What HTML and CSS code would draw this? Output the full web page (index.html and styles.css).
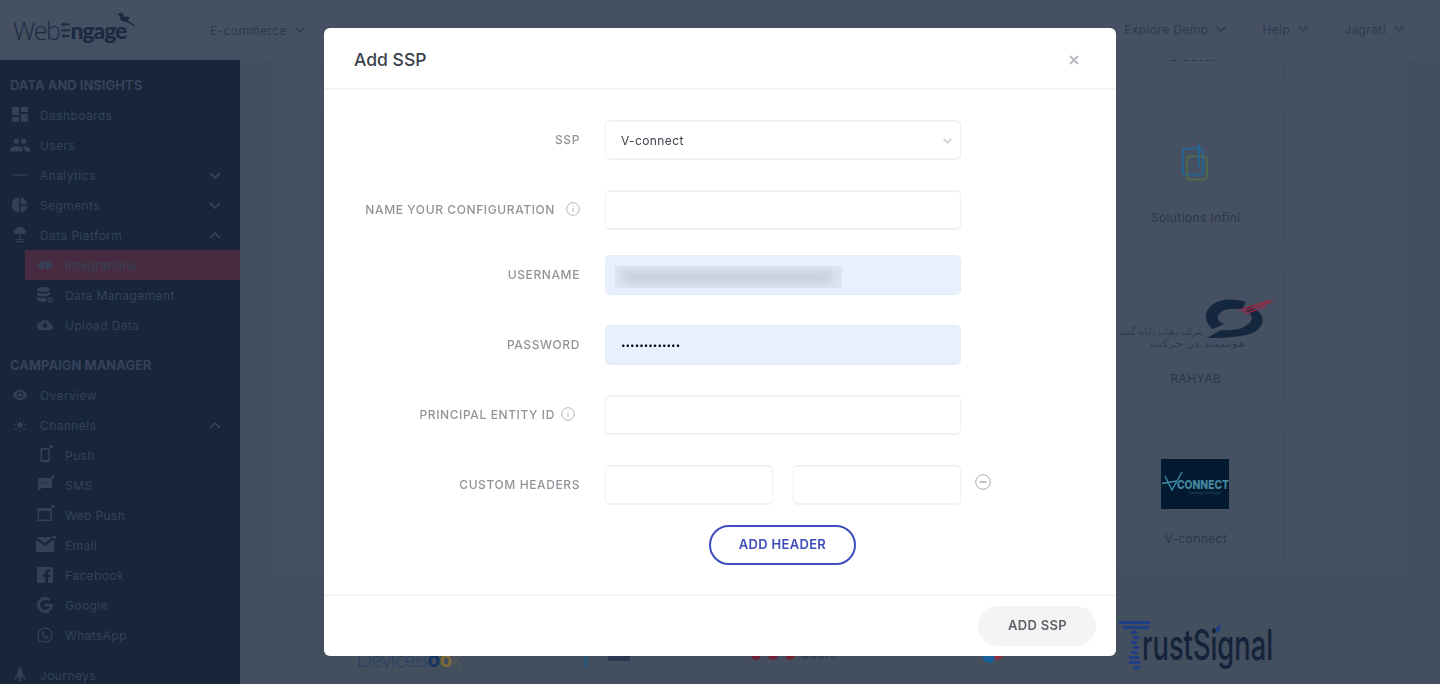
FILE: index.html
```html
<!DOCTYPE html>
<html lang="en">
<head>
<meta charset="utf-8">
<title>Add SSP</title>
<link rel="stylesheet" href="styles.css">
</head>
<body>
<header class="topbar">
  <div class="logo">
    <span class="logo-web">Web</span>
    <svg class="logo-e" viewBox="0 0 9 17"><path d="M3.500 0v1.500H9v1.800H3.500v1.500L0 2.400zM0 7.500h9v1.800H0zM3.500 11.500v1.500H9v1.800H3.500v1.700L0 14.100z"/></svg>
    <span class="logo-ngage">ngage</span>
    <svg class="logo-bird" viewBox="0 0 38 32"><path d="M1 4.500 7 5c2-3 6-3.500 8-1 2 2.500 3 5 3.500 7C20 9 25 8 26 11c.8 2.500-1 4-3 4l13 9-1.500 1.500L21 18c-5 1-10-2-11-7-.6-2.500-.8-4-2-5z"/></svg>
  </div>
  <nav class="nav-left"><span class="nav-item">E-commerce<svg class="chev" viewBox="0 0 10 6"><path d="M.7.7 5 5 9.300.7"/></svg></span></nav>
  <nav class="nav-right">
    <span class="nav-item">Explore Demo<svg class="chev" viewBox="0 0 10 6"><path d="M.7.7 5 5 9.300.7"/></svg></span>
    <span class="nav-item">Help<svg class="chev" viewBox="0 0 10 6"><path d="M.7.7 5 5 9.300.7"/></svg></span>
    <span class="nav-item">Jagrati<svg class="chev" viewBox="0 0 10 6"><path d="M.7.7 5 5 9.300.7"/></svg></span>
  </nav>
</header>

<div class="shell">
  <aside class="sidebar">
    <h2 class="side-title">Data and Insights</h2>
    <a class="side-item"><svg class="ic" viewBox="0 0 16 16"><path d="M0 0h7v8H0zM9 0h7v5H9zM0 10h7v5H0zM9 7h7v8H9z"/></svg>Dashboards</a>
    <a class="side-item"><svg class="ic ic-wide" viewBox="0 0 24 24"><path d="M16 11c1.660 0 2.990-1.340 2.990-3S17.660 5 16 5c-1.660 0-3 1.340-3 3s1.340 3 3 3zm-8 0c1.660 0 2.990-1.340 2.990-3S9.660 5 8 5C6.340 5 5 6.340 5 8s1.340 3 3 3zm0 2c-2.330 0-7 1.170-7 3.500V19h14v-2.500c0-2.330-4.670-3.500-7-3.500zm8 0c-.29 0-.62.02-.97.05 1.160.84 1.970 1.970 1.970 3.450V19h6v-2.500c0-2.330-4.670-3.500-7-3.500z"/></svg>Users</a>
    <a class="side-item"><svg class="ic line" viewBox="0 0 16 16"><path d="M1 9l3-1.500L7 9l3-2 2 1.500L15 7"/></svg>Analytics<svg class="side-chev" viewBox="0 0 12 7"><path d="M1 1l5 5 5-5"/></svg></a>
    <a class="side-item"><svg class="ic" viewBox="0 0 16 16"><path d="M7 .5v15A7.500 7.500 0 0 1 7 .5zM8.500.5a7.500 7.500 0 0 1 7 7h-7zM8.500 9h7a7.500 7.500 0 0 1-7 6.500z"/></svg>Segments<svg class="side-chev" viewBox="0 0 12 7"><path d="M1 1l5 5 5-5"/></svg></a>
    <a class="side-item"><svg class="ic" viewBox="0 0 16 16"><path d="M4.500 7a2.600 2.600 0 0 1-.3-5.200A4.500 4.500 0 0 1 12.300 2 2.600 2.600 0 0 1 11.500 7zM7.400 8h1.200v4H12v1H4v-1h3.400zM3 14h10v1.200H3z"/></svg>Data Platform<svg class="side-chev" viewBox="0 0 12 7"><path d="M1 6l5-5 5 5"/></svg></a>
    <a class="side-sub is-active"><svg class="ic" viewBox="0 0 16 10"><path d="M0 5l4-4h3v8H4zM8.500 1H12l4 4-4 4H8.500z"/></svg>Integrations</a>
    <a class="side-sub"><svg class="ic" viewBox="0 0 16 16"><path d="M0 2.500C0 1 3 0 6.500 0S13 1 13 2.500 10 5 6.500 5 0 4 0 2.500zM0 4.500C1 6 4 6.400 6.500 6.400S12 6 13 4.500V7c0 1.500-3 2.500-6.500 2.500S0 8.500 0 7zM0 9c1 1.500 4 2 6.500 2H9v3.600c-.8.200-1.600.4-2.500.4C3 15 0 14 0 12.500z"/><circle class="gear" cx="13" cy="13" r="2"/></svg>Data Management</a>
    <a class="side-sub"><svg class="ic" viewBox="0 0 24 24"><path d="M19.350 10.040C18.670 6.590 15.640 4 12 4 9.110 4 6.600 5.640 5.350 8.040 2.340 8.360 0 10.910 0 14c0 3.310 2.690 6 6 6h13c2.760 0 5-2.240 5-5 0-2.640-2.050-4.780-4.650-4.960zM14 13v4h-4v-4H7l5-5 5 5h-3z"/></svg>Upload Data</a>

    <h2 class="side-title side-title-next">Campaign Manager</h2>
    <a class="side-item"><svg class="ic" viewBox="0 0 24 24"><path d="M12 4.500C7 4.500 2.730 7.610 1 12c1.730 4.390 6 7.500 11 7.500s9.270-3.110 11-7.500c-1.730-4.390-6-7.500-11-7.500zM12 17c-2.760 0-5-2.240-5-5s2.240-5 5-5 5 2.240 5 5-2.240 5-5 5zm0-8c-1.660 0-3 1.340-3 3s1.340 3 3 3 3-1.340 3-3-1.340-3-3-3z"/></svg>Overview</a>
    <a class="side-item"><svg class="ic" viewBox="0 0 16 16"><circle cx="8" cy="8" r="2.800"/><path class="ray" d="M8 1v2.500M8 12.500V15M1.500 8H4M12 8h2.500M3.200 3.200l1.800 1.800M11 11l1.800 1.800M12.800 3.200 11 5M5 11l-1.800 1.800"/></svg>Channels<svg class="side-chev" viewBox="0 0 12 7"><path d="M1 6l5-5 5 5"/></svg></a>
    <a class="side-sub"><svg class="ic ic-up" viewBox="0 0 18 18"><path fill-rule="evenodd" d="M4.500 3h7.500a1 1 0 0 1 1 1v12a1 1 0 0 1-1 1H4.500a1 1 0 0 1-1-1V4a1 1 0 0 1 1-1zM5 4.500V15h6.500V4.500z"/><circle cx="14.500" cy="1.500" r="1.700"/></svg>Push</a>
    <a class="side-sub"><svg class="ic ic-up" viewBox="0 0 18 18"><path fill-rule="evenodd" d="M2 3h12a1 1 0 0 1 1 1v8a1 1 0 0 1-1 1H5l-4 3V4a1 1 0 0 1 1-1zM4.500 7.300v1.200H6V7.300zm2.500 0v1.200h1.500V7.300zm2.500 0v1.200H11V7.300z"/><circle cx="16" cy="2" r="1.700"/></svg>SMS</a>
    <a class="side-sub"><svg class="ic ic-up" viewBox="0 0 18 18"><path fill-rule="evenodd" d="M1.500 3h12.500a1 1 0 0 1 1 1v11a1 1 0 0 1-1 1H1.500a1 1 0 0 1-1-1V4a1 1 0 0 1 1-1zM2 6v8.500h11.500V6z"/><circle cx="16" cy="1.500" r="1.700"/></svg>Web Push</a>
    <a class="side-sub"><svg class="ic ic-mail" viewBox="0 0 20 18"><path d="M0 2h17L8.500 8.500zM0 4.500l9 6.500 9-6.500V17H0z"/><circle cx="18.500" cy="2" r="1.800"/></svg>Email</a>
    <a class="side-sub"><svg class="ic" viewBox="0 0 16 16"><path fill-rule="evenodd" d="M1 0h14a1 1 0 0 1 1 1v14a1 1 0 0 1-1 1h-4v-6h2l.4-2.500H11V6c0-.8.3-1.200 1.200-1.200h1.300V2.500c-.5 0-1.200-.1-2-.1-2 0-3.300 1.200-3.300 3.300v1.800H6V10h2.200v6H1a1 1 0 0 1-1-1V1a1 1 0 0 1 1-1z"/></svg>Facebook</a>
    <a class="side-sub"><svg class="ic" viewBox="0 0 16 16"><path d="M8 0a8 8 0 0 1 5.500 2.100l-2.100 2.100A5 5 0 1 0 12.800 9.300H8V6.700h7.800c.5 4.700-2.800 9.300-7.800 9.300A8 8 0 0 1 8 0z"/></svg>Google</a>
    <a class="side-sub"><svg class="ic" viewBox="0 0 16 16"><path class="wa" d="M8 1a7 7 0 0 0-6 10.600L1 15l3.500-1A7 7 0 1 0 8 1z"/><path d="M5.500 4.500c-.8.500-1.200 1.500-.8 2.700.6 1.800 2.400 3.700 4.300 4.300 1.200.4 2.200-.1 2.700-.9.200-.4.100-.7-.2-.9l-1.300-.7c-.3-.1-.5 0-.7.200l-.5.600c-1.200-.5-2.200-1.500-2.700-2.700l.6-.5c.2-.2.300-.4.200-.7l-.7-1.300c-.2-.3-.5-.300-.9-.1z"/></svg>WhatsApp</a>
    <a class="side-item side-item-last"><svg class="ic" viewBox="0 0 16 18"><path d="M8 0c2.500 2 3 5 3 7.500V12H5V7.500C5 5 5.500 2 8 0zM4.300 8v4.500L2 15v-3.500zM11.700 8 14 11.500V15l-2.300-2.500zM6 13h4l-.5 2L8 17.500 6.500 15z"/></svg>Journeys</a>
  </aside>

  <main class="content">
    <div class="panel">
      <section class="cards">
        <article class="card"></article>
        <article class="card"></article>
        <article class="card"></article>
        <article class="card"></article>
        <article class="card"><div class="logo-slot"></div><p class="card-name">Bradster</p></article>

        <article class="card"></article>
        <article class="card"></article>
        <article class="card"></article>
        <article class="card"></article>
        <article class="card"><div class="logo-slot"><svg class="lg-si" viewBox="0 0 26 38"><rect x="1" y="5.500" width="20" height="26" rx="3" class="si-blue"/><rect x="5" y="13.500" width="20" height="23" rx="3" class="si-green"/><path d="M17 0v24" class="si-blue"/></svg></div><p class="card-name">Solutions Infini</p></article>

        <article class="card"></article>
        <article class="card"></article>
        <article class="card"></article>
        <article class="card"></article>
        <article class="card"><div class="logo-slot"><svg class="lg-rahyab" viewBox="0 0 155 55"><path class="ra-dark" d="M128 6C112 0 88 4 88 21c0 5 3 9 7 12l11-5c-7-3-8-7-4-11 5-5 16-5 22-3z"/><path class="ra-dark" d="M131 10c15 5 18 17 7 25-9 6-28 7-49 7l14-8c14 1 26-2 30-9 2-4 0-8-6-10z"/><path class="ra-red" d="M121 14 152 4.500M124 16 155 5M127 18 148 10"/><text x="0" y="39" class="ra-fa" textLength="85" lengthAdjust="spacingAndGlyphs">شرکت رهیاب رایانه گستر</text><text x="32" y="51" class="ra-fa" textLength="95" lengthAdjust="spacingAndGlyphs">هوشمند در حرکت</text></svg></div><p class="card-name card-name-low">RAHYAB</p></article>

        <article class="card"></article>
        <article class="card"></article>
        <article class="card"></article>
        <article class="card"></article>
        <article class="card"><div class="logo-slot"><svg class="lg-vc" viewBox="0 0 68 50"><rect width="68" height="50" class="vc-bg"/><path d="M1 24.500 16 22M4 17l7 14 10-18" class="vc-tick"/><text x="16" y="30" class="vc-text" textLength="52" lengthAdjust="spacingAndGlyphs">CONNECT</text><text x="28" y="35" class="vc-sub" textLength="32" lengthAdjust="spacingAndGlyphs">Connecting Technologies</text></svg></div><p class="card-name">V-connect</p></article>

        <article class="card card-devicebook"><span class="db-text">Device<span class="db-b">B</span><span class="db-o1">o</span><span class="db-o2">o</span><span class="db-k">k</span></span></article>
        <article class="card card-foot"><svg class="foot-a" viewBox="0 0 50 14"><path d="M3 0h4v11H3z"/><path class="foot-a-dark" d="M27 0h22v5H27z"/></svg></article>
        <article class="card card-foot"><svg class="foot-b" viewBox="0 0 110 14"><circle cx="5" cy="2" r="5"/><circle cx="22" cy="2" r="5"/><circle cx="39" cy="2" r="5"/><text x="50" y="6" class="foot-b-text">MOBIO</text></svg></article>
        <article class="card card-foot"><svg class="foot-c" viewBox="0 0 26 8"><path class="fc-b" d="M3 0h13c-1 4-3 7-7 7-4 0-6-3-6-7z"/><path class="fc-r" d="M14 0h10c-2 2-5 4-9 4z"/></svg></article>
        <article class="card card-trust"><svg class="lg-trust" viewBox="0 0 156 50"><path class="ts-blue" d="M0 1h31v3H0zM4 6h26v3H4zM12 11h6v3h-6zM14 16h6v3h-6zM12 21h6v3h-6zM14 26h6v3h-6zM12 31h6v3h-6zM10 36h10v3H10zM10 41h11v3H10zM14 46h7v3h-7z"/><text x="23" y="40" class="ts-text" textLength="131" lengthAdjust="spacingAndGlyphs">rustSignal</text><path class="ts-blue" d="M97 8l5-4-1 7-4 2z"/></svg></article>
      </section>
    </div>
  </main>
</div>

<div class="modal-layer">
  <div class="modal" role="dialog" aria-label="Add SSP">
    <div class="modal-head">
      <h1 class="modal-title">Add SSP</h1>
      <svg class="close" viewBox="0 0 10 10"><path d="M1 1l8 8M9 1l-8 8"/></svg>
    </div>
    <form class="modal-body">
      <div class="row">
        <label class="lbl">SSP</label>
        <div class="ctl">
          <div class="select-wrap">
            <select class="field field-select"><option>V-connect</option></select>
            <svg class="select-chev" viewBox="0 0 10 6"><path d="M.7.7 5 5 9.300.7"/></svg>
          </div>
        </div>
      </div>
      <div class="row row-tight">
        <label class="lbl">Name your configuration<svg class="info info-far" viewBox="0 0 14 14"><circle cx="7" cy="7" r="6.300"/><path d="M7 6v4.200M7 3.600v1.100"/></svg></label>
        <div class="ctl"><input class="field" type="text"></div>
      </div>
      <div class="row">
        <label class="lbl">Username</label>
        <div class="ctl"><div class="field field-auto field-blur"><span class="smudge"></span></div></div>
      </div>
      <div class="row">
        <label class="lbl">Password</label>
        <div class="ctl"><input class="field field-auto field-pass" type="password" value="aaaaaaaaaaaaa"></div>
      </div>
      <div class="row">
        <label class="lbl lbl-pad">Principal Entity ID<svg class="info info-near" viewBox="0 0 14 14"><circle cx="7" cy="7" r="6.300"/><path d="M7 6v4.200M7 3.600v1.100"/></svg></label>
        <div class="ctl"><input class="field" type="text"></div>
      </div>
      <div class="row row-btn">
        <label class="lbl">Custom Headers</label>
        <div class="ctl ctl-pair"><input class="field" type="text"><input class="field" type="text"></div>
        <svg class="minus" viewBox="0 0 16 16"><circle cx="8" cy="8" r="7.300"/><path d="M4.500 8h7"/></svg>
      </div>
      <div class="row-add"><button type="button" class="btn-outline">ADD HEADER</button></div>
    </form>
    <div class="modal-foot"><button type="button" class="btn-muted">ADD SSP</button></div>
  </div>
</div>
</body>
</html>
```

FILE: styles.css
```css
* { box-sizing: border-box; }
html, body { height: 100%; }
body {
  margin: 0;
  height: 684px;
  overflow: hidden;
  display: flex;
  flex-direction: column;
  background: #465063;
  font-family: Inter, "Liberation Sans", sans-serif;
  font-size: 12px;
  letter-spacing: .4px;
}

/* top bar */
.topbar {
  height: 60px;
  flex: none;
  display: flex;
  align-items: center;
  background: #465063;
  position: relative;
  z-index: 2;
  color: #2e3a4e;
}
.logo {
  width: 210px;
  flex: none;
  display: flex;
  align-items: center;
  padding-left: 13px;
  color: #1b2a40;
  position: relative;
  height: 60px;
  letter-spacing: 0;
}
.logo-web { font-family: "Open Sans", sans-serif; font-weight: 300; font-size: 25px; letter-spacing: -1.500px; }
.logo-e { width: 9px; height: 17px; fill: #1b2a40; margin: 1px 0 0 2px; }
.logo-ngage { font-family: Lato, sans-serif; font-weight: 900; font-size: 23px; letter-spacing: -1.100px; margin-top: -1px; }
.logo-bird { width: 22px; height: 19px; fill: #1b2a40; position: absolute; left: 114px; top: 11px; }
.nav-item { display: inline-flex; align-items: center; margin-top: -2px; }
.chev { width: 10px; height: 6px; margin-left: 8px; fill: none; stroke: #2e3a4e; stroke-width: 1.400; }
.nav-right { margin-left: auto; display: flex; gap: 36px; padding-right: 36px; }

/* shell */
.shell { flex: 1; display: flex; min-height: 0; }
.sidebar {
  width: 240px;
  flex: none;
  background: #17263b;
  padding-top: 15px;
  overflow: hidden;
  color: #35425a;
}
.side-title {
  margin: 0;
  height: 20px;
  line-height: 20px;
  padding-left: 10px;
  font-size: 13px;
  font-weight: 700;
  letter-spacing: 0;
  text-transform: uppercase;
  color: #35425a;
}
.side-title-next { margin-top: 15px; }
.side-item, .side-sub {
  height: 30px;
  display: flex;
  align-items: center;
  position: relative;
}
.side-title + .side-item { margin-top: 5px; }
.side-item { padding-left: 40px; }
.side-sub { margin-left: 25px; padding-left: 40px; }
.side-item-last { margin-top: 10px; }
.is-active { background: #472c41; }
.ic { width: 16px; height: 16px; fill: #334055; position: absolute; top: 7px; left: 12px; }
.ic-wide { width: 22px; height: 22px; top: 4px; left: 9px; }
.ic-up { width: 18px; height: 18px; top: 5px; }
.ic-mail { width: 20px; height: 18px; top: 5px; left: 11px; }
.line { fill: none; stroke: #334055; stroke-width: 1.100; }
.ray { fill: none; stroke: #334055; stroke-width: 1.200; }
.wa { fill: none; stroke: #334055; stroke-width: 1.300; }
.gear { fill: none; stroke: #334055; stroke-width: 1.300; }
.side-chev { position: absolute; left: 209px; top: 12px; width: 12px; height: 7px; fill: none; stroke: #334055; stroke-width: 1.800; }

/* background content */
.content { flex: 1; min-width: 0; background: #434e5f; padding-left: 30px; padding-right: 30px; overflow: hidden; }
.panel {
  height: 100%;
  background: #465063;
  border-left: 1px solid #3f4a5c;
  border-right: 1px solid #3f4a5c;
  padding-left: 50px;
}
.cards {
  display: grid;
  grid-template-columns: repeat(5, 176px);
  grid-auto-rows: 140px;
  column-gap: 20.700px;
  row-gap: 20.500px;
  margin-top: -113px;
}
.card {
  border: 1px solid #404b5d;
  border-radius: 5px;
  display: flex;
  flex-direction: column;
  align-items: center;
  overflow: hidden;
}
.logo-slot { height: 90px; flex: none; display: flex; align-items: flex-end; justify-content: center; width: 100%; }
.card-name { margin: 11px 0 0; color: #2a364a; line-height: 16px; }
.card-name-low { margin-top: 12px; }

.lg-si { width: 26px; height: 38px; fill: none; stroke-width: 1.600; margin: 0 0 18px -2px; }
.si-blue { stroke: #1c6a9d; }
.si-green { stroke: #4f7048; }

.lg-rahyab { width: 155px; height: 55px; flex: none; margin-bottom: 8px; }
.ra-dark { fill: #14273e; }
.ra-red { fill: none; stroke: #8c2c45; stroke-width: 1.500; }
.ra-fa { font-family: "DejaVu Sans", sans-serif; font-size: 10px; fill: #2f3a4d; letter-spacing: 0; }

.lg-vc { width: 68px; height: 50px; flex: none; margin: 0 0 11px -2px; }
.vc-bg { fill: #041a30; }
.vc-tick { fill: none; stroke: #3d8aa6; stroke-width: 1.500; }
.vc-text { font-size: 12px; font-weight: 800; fill: #43879f; letter-spacing: 0; }
.vc-sub { font-size: 3.500px; fill: #2a5a72; letter-spacing: 0; }

.card-devicebook { justify-content: flex-end; padding-bottom: 55px; height: 140px; }
.db-text { font-family: "Open Sans", sans-serif; font-weight: 300; font-size: 21px; color: #253f62; letter-spacing: -.7px; }
.db-b { color: #2a4463; }
.db-o1 { color: #14365e; font-weight: 700; }
.db-o2 { color: #7b6a3a; font-weight: 700; }
.db-k { color: #5b5e50; }
.card-foot { padding-top: 66px; }
.foot-a { width: 50px; height: 14px; fill: #2c5475; }
.foot-a-dark { fill: #2a3a50; }
.foot-b { width: 110px; height: 14px; fill: #6e2436; margin: -3px 0 0 8px; }
.foot-b-text { font-size: 8px; font-weight: 700; letter-spacing: 2px; fill: #2e3a4e; }
.foot-c { width: 26px; height: 8px; margin-left: -12px; }
.fc-b { fill: #17609a; }
.fc-r { fill: #8c2d45; }
.card-trust { align-items: flex-start; padding: 30px 0 0 10px; }
.lg-trust { width: 156px; height: 50px; flex: none; }
.ts-blue { fill: #1e3f86; }
.ts-text { font-size: 42px; font-weight: 500; fill: #14233a; letter-spacing: 0; }

/* modal */
.modal-layer {
  position: fixed;
  inset: 0;
  z-index: 10;
  display: flex;
  justify-content: center;
  padding-top: 28px;
}
.modal {
  width: 792px;
  height: 628px;
  background: #fff;
  border-radius: 6px;
  display: flex;
  flex-direction: column;
}
.modal-head {
  height: 62px;
  flex: none;
  display: flex;
  align-items: center;
  justify-content: space-between;
  padding: 2px 37px 0 30px;
  border-bottom: 2px solid #f5f5f5;
}
.modal-title { margin: 0; font-size: 17.500px; font-weight: 500; letter-spacing: 0; color: #3b3f4a; }
.close { width: 10px; height: 10px; margin-top: 2px; fill: none; stroke: #b9bac0; stroke-width: 2; }

.modal-body { flex: 1; padding-top: 30px; display: flex; flex-direction: column; }
.row { display: flex; align-items: center; margin-bottom: 30px; position: relative; }
.row-tight { margin-bottom: 25px; }
.row-btn { margin-bottom: 20px; }
.lbl {
  width: 256px;
  flex: none;
  display: flex;
  align-items: center;
  justify-content: flex-end;
  margin-top: -2px;
  font-size: 12px;
  font-weight: 500;
  letter-spacing: .6px;
  text-transform: uppercase;
  color: #929399;
  white-space: nowrap;
}
.lbl-pad { padding-right: 5px; }
.ctl { width: 356px; margin-left: 25px; flex: none; }
.ctl-pair { display: flex; gap: 20px; }
.ctl-pair .field { width: 168px; }
.field {
  display: block;
  width: 100%;
  height: 40px;
  margin: 0;
  border: solid #f1f1f3;
  border-width: 2px 1px;
  border-radius: 5px;
  background: #fff;
  padding: 0 15px;
  font-family: inherit;
  font-size: 12px;
  letter-spacing: .4px;
  color: #3b3f4a;
  outline: none;
}
.field-auto { background: #e8f0fe; border-color: #e6edf9; }
.field-pass { color: #000; letter-spacing: 0; font-size: 8.100px; }
.field-blur { padding: 9px 0 0 9px; overflow: hidden; }
.smudge {
  display: block;
  width: 227px;
  height: 22px;
  background: #dde4f1;
  overflow: hidden;
  position: relative;
}
.smudge::after {
  content: "";
  position: absolute;
  left: 8px;
  right: 10px;
  top: 5px;
  bottom: 5px;
  background: #c8cfdc;
  filter: blur(4px);
}
.select-wrap { position: relative; }
.field-select { appearance: none; -webkit-appearance: none; }
.select-chev { position: absolute; right: 9px; top: 18px; width: 9px; height: 6px; fill: none; stroke: #b2b4ba; stroke-width: 1.200; }
.info { width: 14px; height: 14px; flex: none; fill: none; stroke: #b2b3b9; stroke-width: 1; }
.info-far { margin-left: 11px; }
.info-near { margin-left: 6px; }
.minus { width: 16px; height: 16px; margin: -6px 0 0 14px; fill: none; stroke: #a9aab0; stroke-width: 1; }
.minus path { stroke-width: 1.500; }
.row-add { width: 356px; margin-left: 280px; display: flex; justify-content: center; }
.btn-outline {
  width: 147px;
  height: 40px;
  padding: 0 0 2px 1px;
  border: 2px solid #3f4cbd;
  border-radius: 20px;
  background: #fff;
  color: #3f4cbd;
  font-family: inherit;
  font-size: 13px;
  font-weight: 600;
  letter-spacing: .3px;
}
.modal-foot {
  height: 62px;
  flex: none;
  display: flex;
  justify-content: flex-end;
  align-items: flex-start;
  padding: 10px 20px 0 0;
  border-top: 2px solid #f5f5f5;
}
.btn-muted {
  width: 118px;
  height: 40px;
  padding: 0 0 2px 1px;
  border: 0;
  border-radius: 20px;
  background: #f4f4f5;
  color: #5e5f67;
  font-family: inherit;
  font-size: 13px;
  font-weight: 600;
  letter-spacing: .3px;
}
```
